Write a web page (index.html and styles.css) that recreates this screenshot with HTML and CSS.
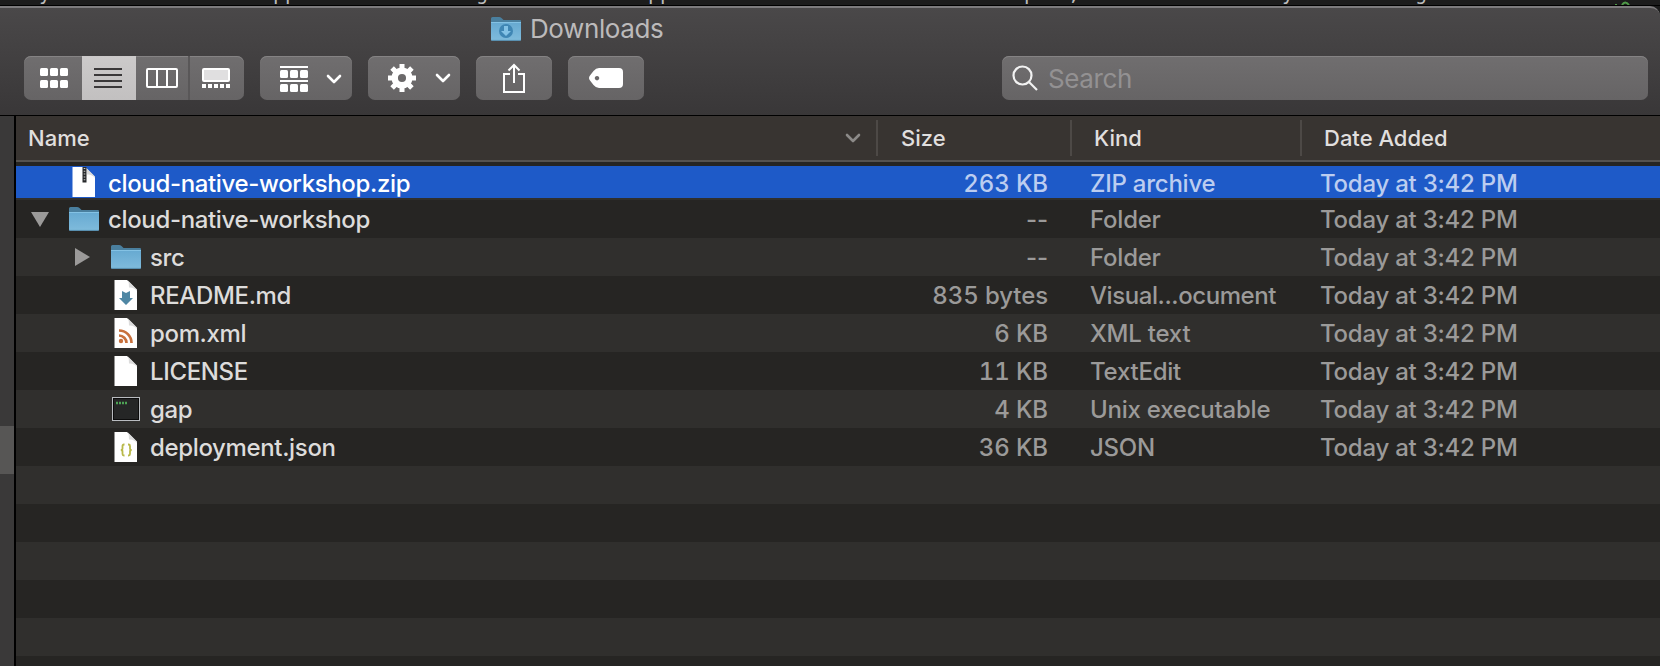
FILE: index.html
```
<!DOCTYPE html>
<html lang="en">
<head>
<meta charset="utf-8">
<title>Downloads</title>
<link rel="stylesheet" href="styles.css">
</head>
<body>
<svg width="0" height="0" class="defs">
  <defs>
    <linearGradient id="fold" x1="0" y1="0" x2="0" y2="1"><stop offset="0" stop-color="#66a9d1"/><stop offset="1" stop-color="#7fbbdc"/></linearGradient>
    <symbol id="folder" viewBox="0 0 30 24">
      <path d="M0 1.500Q0 0 1.500 0H8q1.500 0 2.500 1l2 2H29q1 0 1 1v4H0z" fill="#4a7f9e"/>
      <path d="M0 5h30v17.500q0 1-1 1H1q-1 0-1-1z" fill="url(#fold)"/>
      <path d="M0 5.500h30" stroke="#84c2e4"/>
      <path d="M.3 23.400h29.400" stroke="#5a93b5"/>
    </symbol>
    <symbol id="page" viewBox="0 0 24 30">
      <path d="M.5 0H13l10 10v20H.5z" fill="#fff"/>
      <path d="M13.500 0l9.500 9.500V11q-3-4-8-3.500Q15.500 3 13.500 0z" fill="#dcdcdc"/>
    </symbol>
    <symbol id="chev" viewBox="0 0 16 10"><path d="M2 2l6 6 6-6" fill="none" stroke="currentColor" stroke-width="2.600" stroke-linecap="round" stroke-linejoin="round"/></symbol>
  </defs>
</svg>
<svg class="behind" width="1660" height="6">
  <g font-size="20"><text x="39" y="0">y</text><text x="273" y="0">pp</text><text x="476" y="0">g</text><text x="648" y="0">pp</text><text x="1024" y="0">p</text><text x="1068" y="0">,</text><text x="1282" y="0">y</text><text x="1415" y="0">g</text></g>
  <path d="M1616 4v2M1622 5q3-5 7 0" fill="none" stroke="#4f9a48" stroke-width="2"/>
</svg>
<div class="window">
  <header class="chrome">
    <div class="title">
      <svg width="30" height="24" viewBox="0 0 30 24"><use href="#folder"/><circle cx="15" cy="14" r="7" fill="#3f86b4"/><path d="M13 9h4v5h3l-5 5-5-5h3z" fill="#83c2e6"/></svg>
      <span>Downloads</span>
    </div>
    <div class="toolbar">
      <div class="segments">
        <div class="seg icons"><svg width="28" height="20" fill="#fff"><rect width="8" height="8" rx="1.500"/><rect x="10" width="8" height="8" rx="1.500"/><rect x="20" width="8" height="8" rx="1.500"/><rect y="12" width="8" height="8" rx="1.500"/><rect x="10" y="12" width="8" height="8" rx="1.500"/><rect x="20" y="12" width="8" height="8" rx="1.500"/></svg></div>
        <div class="seg active"><svg width="28" height="20"><path d="M0 1h28M0 7h28M0 13h28M0 19h28" stroke="#3a3839" stroke-width="2"/></svg></div>
        <div class="seg columns"><svg width="32" height="20"><rect x="1" y="1" width="30" height="18" rx="1" fill="none" stroke="#fff" stroke-width="2"/><path d="M11 1v18M21 1v18" stroke="#fff" stroke-width="2"/></svg></div>
        <div class="seg gallery"><svg width="28" height="20"><rect x="1" y="1" width="26" height="12" rx="1" fill="#e0dfe0" stroke="#fff" stroke-width="2"/><path d="M0 18h28" stroke="#fff" stroke-width="4" stroke-dasharray="4 2"/></svg></div>
      </div>
      <div class="btn arrange"><svg width="28" height="26" fill="#fff"><rect width="28" height="2"/><rect y="14" width="28" height="2"/><rect y="4" width="8" height="8" rx="1.500"/><rect x="10" y="4" width="8" height="8" rx="1.500"/><rect x="20" y="4" width="8" height="8" rx="1.500"/><rect y="18" width="8" height="8" rx="1.500"/><rect x="10" y="18" width="8" height="8" rx="1.500"/><rect x="20" y="18" width="8" height="8" rx="1.500"/></svg><svg width="16" height="10"><use href="#chev"/></svg></div>
      <div class="btn arrange gear"><svg width="28" height="28" viewBox="-14 -14 28 28"><circle r="7.300" fill="none" stroke="#fff" stroke-width="6.500"/><g stroke="#fff" stroke-width="5"><path d="M0-14v5M0 14v-5M-14 0h5M14 0h-5"/><path d="M0-14v5M0 14v-5M-14 0h5M14 0h-5" transform="rotate(45)"/></g></svg><svg width="16" height="10"><use href="#chev"/></svg></div>
      <div class="btn action"><svg width="22" height="30" fill="none" stroke="#fff" stroke-width="2"><path d="M7 11H1v18h20V11h-6M11 20V2M5.500 7.500L11 2l5.500 5.500"/></svg></div>
      <div class="btn action"><svg width="34" height="20"><path fill="#fff" fill-rule="evenodd" d="M10 0h20q4 0 4 4v12q0 4-4 4H10Q7 20 4.500 17L1 12.500q-2-2.500 0-5L4.500 3Q7 0 10 0zM8 8a2.200 2.200 0 1 0 .01 0z"/></svg></div>
      <div class="search"><svg width="26" height="26" fill="none" stroke="#f2f2f2" stroke-width="2.200"><circle cx="10.500" cy="10.500" r="9"/><path d="M17 17l8 8"/></svg><span>Search</span></div>
    </div>
  </header>
  <div class="body">
    <aside class="sidebar"><div class="selected"></div></aside>
    <main class="list">
      <div class="head">
        <div class="h name"><span>Name</span><svg width="16" height="10"><use href="#chev"/></svg></div>
        <div class="h size">Size</div><div class="h kind">Kind</div><div class="h date">Date Added</div>
      </div>
      <div class="row sel">
        <div class="n"><svg class="zip" width="24" height="30"><use href="#page"/><path d="M10.500 0h4v15.500h-4z" fill="#26282b"/><path d="M12.500 1v14" stroke="#c9c9c9" stroke-width="1.600" stroke-dasharray="1 1.800"/></svg><span>cloud-native-workshop.zip</span></div>
        <div class="s">263 KB</div><div class="k">ZIP archive</div><div class="d">Today at 3:42 PM</div>
      </div>
      <div class="row">
        <div class="n"><svg class="tri open" width="18" height="15"><path d="M0 0h18L9 15z" fill="#9b9a99"/></svg><svg width="30" height="24"><use href="#folder"/></svg><span>cloud-native-workshop</span></div>
        <div class="s none">--</div><div class="k">Folder</div><div class="d">Today at 3:42 PM</div>
      </div>
      <div class="row child">
        <div class="n"><svg class="tri" width="15" height="18"><path d="M0 0l15 9L0 18z" fill="#9b9a99"/></svg><svg width="30" height="24"><use href="#folder"/></svg><span>src</span></div>
        <div class="s none">--</div><div class="k">Folder</div><div class="d">Today at 3:42 PM</div>
      </div>
      <div class="row child">
        <div class="n"><svg class="file" width="24" height="30"><use href="#page"/><path d="M8 11l4 2 4-2v7h3l-7 7-7-7h3z" fill="#4f87a4"/></svg><span>README.md</span></div>
        <div class="s">835 bytes</div><div class="k tight">Visual...ocument</div><div class="d">Today at 3:42 PM</div>
      </div>
      <div class="row child">
        <div class="n"><svg class="file" width="24" height="30"><use href="#page"/><circle cx="7" cy="23" r="2.200" fill="#c8713d"/><path d="M5 17.500a7.500 7.500 0 0 1 7.500 7.500M5 12.500A12.500 12.500 0 0 1 17.500 25" fill="none" stroke="#c8713d" stroke-width="2.700"/></svg><span>pom.xml</span></div>
        <div class="s">6 KB</div><div class="k">XML text</div><div class="d">Today at 3:42 PM</div>
      </div>
      <div class="row child">
        <div class="n"><svg class="file" width="24" height="30"><use href="#page"/></svg><span>LICENSE</span></div>
        <div class="s">11 KB</div><div class="k">TextEdit</div><div class="d">Today at 3:42 PM</div>
      </div>
      <div class="row child">
        <div class="n"><svg class="term" width="28" height="24"><rect x=".5" y=".5" width="27" height="23" fill="#0c0c0c" stroke="#b9bcc0"/><rect x="2" y="2" width="24" height="20" fill="#252626"/><path d="M4 6h11" stroke="#4da355" stroke-width="2.500" stroke-dasharray="2 1"/></svg><span>gap</span></div>
        <div class="s">4 KB</div><div class="k">Unix executable</div><div class="d">Today at 3:42 PM</div>
      </div>
      <div class="row child">
        <div class="n"><svg class="file" width="24" height="30"><use href="#page"/><g fill="none" stroke="#b9b94a" stroke-width="1.800"><path d="M10.500 12.500H10q-1.500 0-1.500 1.500v2.500q0 1.500-1.700 1.500 1.700 0 1.700 1.500V22q0 1.500 1.500 1.500h.5M14 12.500h.5q1.500 0 1.500 1.500v2.500q0 1.500 1.700 1.500-1.700 0-1.700 1.500V22q0 1.500-1.500 1.500H14"/></g></svg><span>deployment.json</span></div>
        <div class="s">36 KB</div><div class="k">JSON</div><div class="d">Today at 3:42 PM</div>
      </div>
      <div class="row"></div><div class="row"></div><div class="row"></div><div class="row"></div><div class="row"></div><div class="row"></div>
    </main>
  </div>
</div>
</body>
</html>
```
FILE: styles.css
```
* { box-sizing: border-box; }
body { margin: 0; width: 1660px; height: 666px; overflow: hidden; background: #1c1c1c; font-family: Inter, "Liberation Sans", sans-serif; }
svg { display: block; flex: none; }
.defs { position: absolute; }
.behind { height: 5px; fill: #bdbdbd; font-family: "DejaVu Sans Mono", monospace; }
.window { height: 661px; border-top: 1px solid #000; display: flex; flex-direction: column; overflow: hidden; }
.chrome { height: 110px; flex: none; border-top: 2px solid #7d7b7d; border-bottom: 1px solid #000; border-top-right-radius: 10px; background: linear-gradient(#4a4849, #393738); }
.title { height: 48px; padding: 0 0 7px 491px; display: flex; align-items: center; gap: 9px; font-size: 26px; letter-spacing: -0.4px; color: #bcbabb; }
.toolbar { display: flex; gap: 16px; padding: 0 12px 0 24px; }
.segments, .btn, .search { height: 44px; border-radius: 7px; background: linear-gradient(#706e6f, #666465); box-shadow: inset 0 1px #858384; }
.segments { width: 220px; display: flex; overflow: hidden; }
.seg { display: flex; align-items: center; justify-content: center; }
.icons { width: 58px; padding-left: 2px; }
.active { width: 54px; padding-right: 2px; background: linear-gradient(#cccaca, #c2c0c0); }
.columns { width: 54px; border-right: 2px solid #595758; }
.gallery { width: 54px; padding-right: 2px; }
.btn { display: flex; align-items: center; color: #fff; }
.arrange { width: 92px; padding: 2px 10px 0 20px; justify-content: space-between; }
.gear { padding: 0 9px 0 20px; }
.action { width: 76px; justify-content: center; }
.search { width: 646px; margin-left: auto; display: flex; align-items: center; padding-left: 10px; gap: 10px; font-size: 26px; letter-spacing: -0.4px; color: #939192; }
.body { flex: 1; display: flex; min-height: 0; }
.sidebar { width: 16px; border-right: 2px solid #000; background: #3a3939; padding-top: 310px; }
.selected { height: 48px; background: #575655; }
.list { flex: 1; background: #262523; }
.head { height: 46px; display: flex; align-items: flex-start; padding-top: 4px; background: #383431; border-bottom: 2px solid #55524f; color: #e0dfde; font-size: 22px; font-weight: 500; }
.h { height: 36px; display: flex; align-items: center; border-right: 2px solid #4d4946; padding-left: 23px; }
.name { width: 862px; padding: 0 15px 0 12px; justify-content: space-between; }
.name svg { color: #8c8a88; }
.size { width: 194px; }
.kind { width: 230px; padding-left: 22px; }
.date { border: 0; padding-left: 22px; }
.row { height: 38px; display: flex; align-items: center; font-size: 24px; font-weight: 450; letter-spacing: -0.23px; color: #9b9a99; }
.row:nth-child(even) { background: #302f2d; }
.n { width: 862px; padding-left: 53px; display: flex; align-items: center; gap: 9px; letter-spacing: -0.35px; color: #dddcdb; }
.child .n { padding-left: 95px; }
.tri { margin: 0 12px 0 -36px; }
.open { margin: 0 11px 0 -38px; }
.zip { margin: 0 3px; }
.file { margin: 0 3px; }
.term { margin: 0 1px; }
.s { width: 170px; text-align: right; letter-spacing: -0.1px; font-variant-numeric: tabular-nums; }
.none { font-variant-numeric: normal; }
.k { width: 230px; padding-left: 42px; white-space: nowrap; }
.tight { letter-spacing: -0.42px; }
.d { padding-left: 42px; white-space: nowrap; }
.row.sel { height: 38px; border-top: 4px solid #262523; border-bottom: 2px solid #302f2d; background: #1e5ac8; color: #bccdf0; }
.sel span, .sel .s, .sel .k, .sel .d { padding-top: 2px; }
.sel .n { color: #fff; }
```
